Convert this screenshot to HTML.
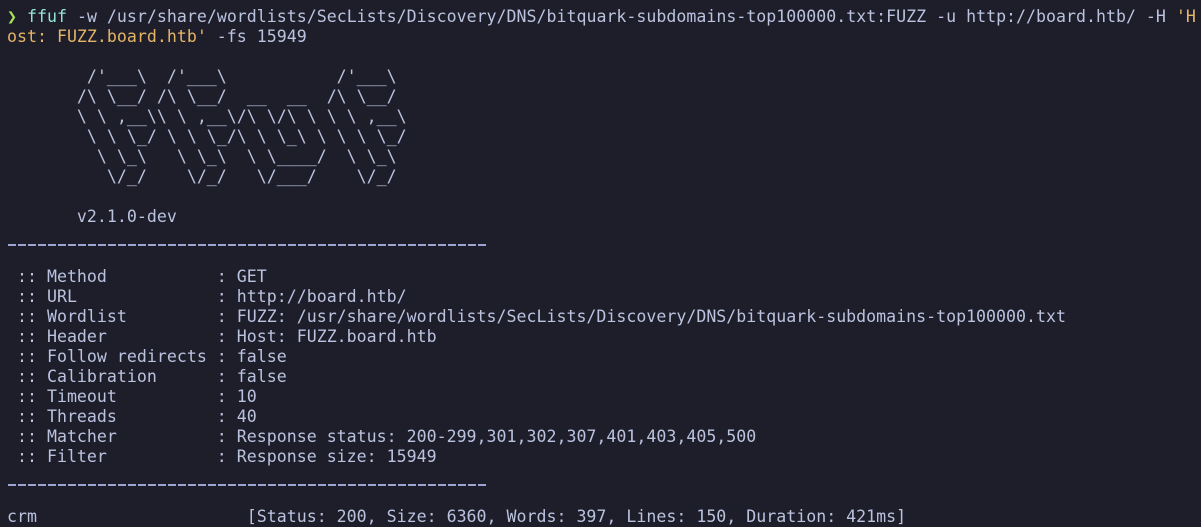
<!DOCTYPE html>
<html><head><meta charset="utf-8"><style>
html,body{margin:0;padding:0;background:#1e1e2b;width:1201px;height:526px;overflow:hidden}
pre{margin:0;position:absolute;left:7px;top:7px;font-family:"DejaVu Sans Mono","Liberation Mono",monospace;font-size:16.6px;line-height:20px;color:#bac2de;white-space:pre}
.g{color:#a6e35a}.t{color:#94e2d5}.y{color:#e5b567}
.sep{position:absolute;left:8px;width:480px;height:2px;background:repeating-linear-gradient(90deg,#9da3cf 0 8px,transparent 8px 10px)}
</style></head><body>
<pre><span class="g">❯</span> <span class="t">ffuf</span> -w /usr/share/wordlists/SecLists/Discovery/DNS/bitquark-subdomains-top100000.txt:FUZZ -u http://board.htb/ -H <span class="y">'H</span>
<span class="y">ost: FUZZ.board.htb'</span> -fs 15949

        /'___\  /'___\           /'___\
       /\ \__/ /\ \__/  __  __  /\ \__/
       \ \ ,__\\ \ ,__\/\ \/\ \ \ \ ,__\
        \ \ \_/ \ \ \_/\ \ \_\ \ \ \ \_/
         \ \_\   \ \_\  \ \____/  \ \_\
          \/_/    \/_/   \/___/    \/_/

       v2.1.0-dev


 :: Method           : GET
 :: URL              : http://board.htb/
 :: Wordlist         : FUZZ: /usr/share/wordlists/SecLists/Discovery/DNS/bitquark-subdomains-top100000.txt
 :: Header           : Host: FUZZ.board.htb
 :: Follow redirects : false
 :: Calibration      : false
 :: Timeout          : 10
 :: Threads          : 40
 :: Matcher          : Response status: 200-299,301,302,307,401,403,405,500
 :: Filter           : Response size: 15949


crm                     [Status: 200, Size: 6360, Words: 397, Lines: 150, Duration: 421ms]
</pre>
<div class="sep" style="top:244px"></div>
<div class="sep" style="top:484px"></div>
</body></html>
